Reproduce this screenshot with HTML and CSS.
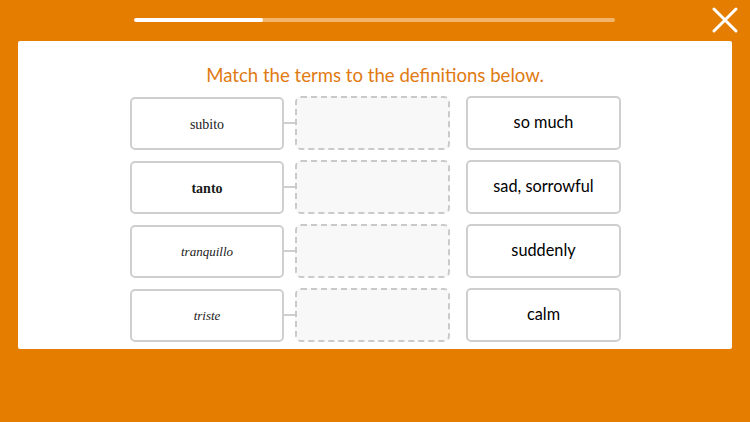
FILE: index.html
```html
<!DOCTYPE html>
<html>
<head>
<meta charset="utf-8">
<link rel="stylesheet" href="styles.css">
</head>
<body>
<div class="header">
  <div class="progress"><div class="progress-fill"></div></div>
  <svg class="close" width="26" height="26" viewBox="0 0 26 26"><path d="M2 2 L24 24 M24 2 L2 24" stroke="#fff" stroke-width="3" stroke-linecap="round" fill="none"/></svg>
</div>
<div class="panel">
  <div class="title">Match the terms to the definitions below.</div>
  <div class="rows">
    <div class="row">
      <div class="term">subito</div><div class="link"></div><div class="slot"></div>
      <div class="def">so much</div>
    </div>
    <div class="row">
      <div class="term bold">tanto</div><div class="link"></div><div class="slot"></div>
      <div class="def">sad, sorrowful</div>
    </div>
    <div class="row">
      <div class="term ital">tranquillo</div><div class="link"></div><div class="slot"></div>
      <div class="def">suddenly</div>
    </div>
    <div class="row">
      <div class="term ital">triste</div><div class="link"></div><div class="slot"></div>
      <div class="def">calm</div>
    </div>
  </div>
</div>
</body>
</html>
```
FILE: styles.css
```css
html, body { margin: 0; padding: 0; }
body {
  background: #e57e00;
  width: 750px;
  height: 422px;
  overflow: hidden;
  font-family: Lato, "Open Sans", sans-serif;
}
.header {
  display: flex;
  align-items: flex-start;
  height: 41px;
  padding-left: 134px;
  box-sizing: border-box;
}
.progress {
  margin-top: 18px;
  width: 481px;
  height: 4px;
  border-radius: 2px;
  background: #f3b46c;
  overflow: hidden;
}
.progress-fill {
  width: 129px;
  height: 100%;
  background: #fff;
  border-radius: 2px;
}
.close {
  margin-left: 97px;
  margin-top: 7px;
}
.panel {
  margin: 0 18px;
  height: 308px;
  background: #fff;
  border-radius: 2px;
  padding-top: 23px;
  box-sizing: border-box;
}
.title {
  text-align: center;
  color: #e07a12;
  font-size: 18.6px;
  line-height: 22px;
  height: 22px;
}
.rows {
  margin-top: 10px;
  display: flex;
  flex-direction: column;
  gap: 10px;
  align-items: center;
}
.row {
  display: flex;
  align-items: center;
  height: 54px;
  margin-left: 1px;
}
.term {
  width: 154px;
  height: 53px;
  box-sizing: border-box;
  border: 2px solid #cfcfcf;
  border-radius: 5px;
  padding-top: 4px;
  display: flex;
  align-items: center;
  justify-content: center;
  font-family: "Liberation Serif", serif;
  font-size: 14px;
  color: #1a1a1a;
}
.bold { font-weight: bold; }
.ital { font-style: italic; font-size: 13px; padding-top: 1px; }
.link {
  width: 11px;
  height: 2px;
  background: #cfcfcf;
}
.slot {
  width: 155px;
  height: 54px;
  box-sizing: border-box;
  border: 2px dashed #cacaca;
  border-radius: 6px;
  background: #f8f8f8;
}
.def {
  margin-left: 16px;
  width: 155px;
  height: 54px;
  box-sizing: border-box;
  border: 2px solid #cfcfcf;
  border-radius: 5px;
  padding-bottom: 3px;
  display: flex;
  align-items: center;
  justify-content: center;
  font-size: 16.3px;
  color: #000;
}
```
